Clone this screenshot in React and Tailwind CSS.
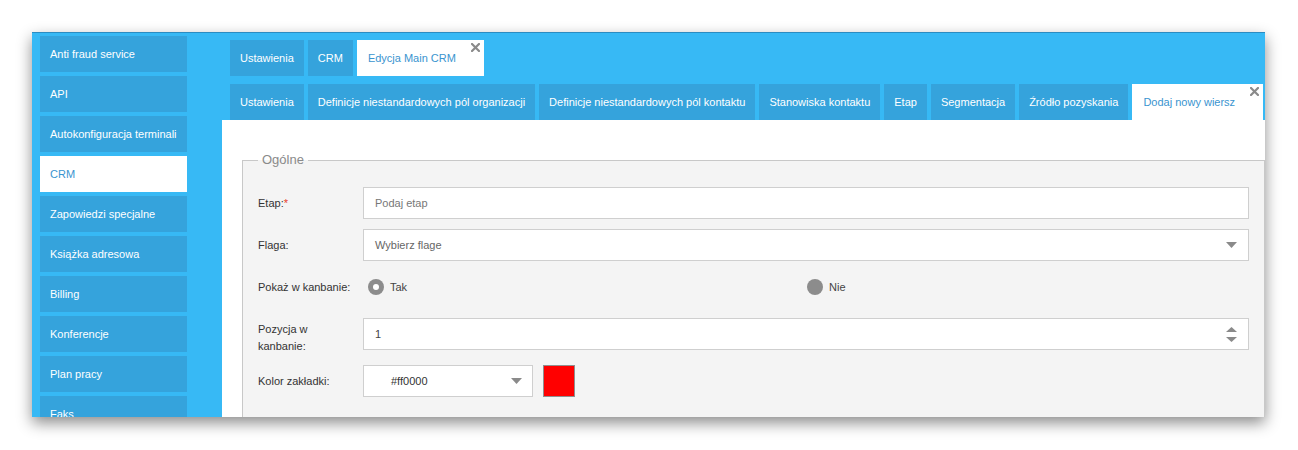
import React from 'react';

const sideItems = [
  'Anti fraud service',
  'API',
  'Autokonfiguracja terminali',
  'CRM',
  'Zapowiedzi specjalne',
  'Książka adresowa',
  'Billing',
  'Konferencje',
  'Plan pracy',
  'Faks',
];

const topTabs = [
  { label: 'Ustawienia' },
  { label: 'CRM' },
  { label: 'Edycja Main CRM', active: true },
];

const subTabs = [
  { label: 'Ustawienia' },
  { label: 'Definicje niestandardowych pól organizacji' },
  { label: 'Definicje niestandardowych pól kontaktu' },
  { label: 'Stanowiska kontaktu' },
  { label: 'Etap' },
  { label: 'Segmentacja' },
  { label: 'Źródło pozyskania' },
  { label: 'Dodaj nowy wiersz', active: true },
];

function CloseX() {
  return (
    <svg width="9" height="9" viewBox="0 0 9 9" className="absolute top-[3px] right-[4px]">
      <path d="M1 1 L8 8 M8 1 L1 8" stroke="#8a8a8a" strokeWidth="2.2" strokeLinecap="square" />
    </svg>
  );
}

function Tab({ label, active }) {
  if (active) {
    return (
      <div className="relative h-[36px] shrink-0 flex items-center bg-white pl-[11px] pr-[28px] text-[11px] text-[#3a94cf]">
        {label}
        <CloseX />
      </div>
    );
  }
  return (
    <div className="h-[36px] shrink-0 flex items-center bg-[#35a3dc] px-[10px] text-[11px] text-white">
      {label}
    </div>
  );
}

function DownArrow() {
  return (
    <svg width="11" height="6" viewBox="0 0 11 6">
      <path d="M0 0 L11 0 L5.5 6 Z" fill="#8a8a8a" />
    </svg>
  );
}

function Radio({ checked }) {
  return (
    <span className="w-[16px] h-[16px] rounded-full bg-[#8c8c8c] flex items-center justify-center">
      {checked && <span className="w-[6px] h-[6px] rounded-full bg-white" />}
    </span>
  );
}

export default function App() {
  return (
    <div className="w-[1298px] h-[450px] bg-white pt-[32px] pl-[32px] font-['Liberation_Sans',Arial,sans-serif]">
      <div className="w-[1233px] h-[385px] flex overflow-hidden bg-[#37b9f5] border-t border-[#2b8cc2] shadow-[0_6px_14px_rgba(0,0,0,0.45)]">
        {/* sidebar */}
        <aside className="w-[190px] shrink-0 pl-[8px] pt-[3px] flex flex-col gap-[4px]">
          {sideItems.map(item => (
            <div
              key={item}
              className={
                item === 'CRM'
                  ? 'w-[147px] h-[36px] shrink-0 flex items-center px-[10px] bg-white text-[11px] text-[#3a94cf]'
                  : 'w-[147px] h-[36px] shrink-0 flex items-center px-[10px] bg-[#35a3dc] text-[11px] text-white'
              }
            >
              {item}
            </div>
          ))}
        </aside>

        {/* main */}
        <div className="flex-1 flex flex-col min-w-0">
          <div className="pl-[8px] pt-[7px]">
            <div className="flex gap-[4px]">
              {topTabs.map(t => <Tab key={t.label} {...t} />)}
            </div>
            <div className="flex gap-[4px] mt-[8px]">
              {subTabs.map(t => <Tab key={t.label} {...t} />)}
            </div>
          </div>

          <div className="flex-1 bg-white pl-[20px] pt-[32px]">
            <fieldset className="border border-[#c8c8c8] bg-[#f4f4f4] px-[15px] pb-[20px]">
              <legend className="px-[4px] text-[13px] leading-[16px] text-[#8a8a8a]">Ogólne</legend>

              <div className="flex items-center h-[32px] mt-[19px]">
                <label className="w-[105px] shrink-0 text-[11px] text-[#333]">
                  Etap:<span className="text-[#e8402a]">*</span>
                </label>
                <div className="flex-1 h-[32px] flex items-center border border-[#cfcfcf] bg-white px-[11px] text-[11px] text-[#777]">
                  Podaj etap
                </div>
              </div>

              <div className="flex items-center h-[32px] mt-[10px]">
                <label className="w-[105px] shrink-0 text-[11px] text-[#333]">Flaga:</label>
                <div className="flex-1 h-[32px] flex items-center justify-between border border-[#cfcfcf] bg-white pl-[11px] pr-[11px] text-[11px] text-[#666]">
                  Wybierz flage
                  <DownArrow />
                </div>
              </div>

              <div className="flex items-center h-[32px] mt-[10px]">
                <label className="w-[105px] shrink-0 text-[11px] text-[#333]">Pokaż w kanbanie:</label>
                <div className="flex-1 grid grid-cols-2">
                  <div className="flex items-center gap-[6px] pl-[5px] text-[11px] text-[#444]">
                    <Radio checked />
                    Tak
                  </div>
                  <div className="flex items-center gap-[6px] pl-[1px] text-[11px] text-[#444]">
                    <Radio />
                    Nie
                  </div>
                </div>
              </div>

              <div className="flex items-start mt-[15px]">
                <label className="w-[105px] shrink-0 pt-[3px] text-[11px] leading-[17px] text-[#333]">
                  Pozycja w<br />kanbanie:
                </label>
                <div className="flex-1 h-[32px] flex items-center justify-between border border-[#cfcfcf] bg-white pl-[11px] pr-[11px] text-[11px] text-[#444]">
                  1
                  <div className="flex flex-col gap-[5px]">
                    <svg width="11" height="5" viewBox="0 0 11 5">
                      <path d="M0 5 L11 5 L5.5 0 Z" fill="#8a8a8a" />
                    </svg>
                    <svg width="11" height="5" viewBox="0 0 11 5">
                      <path d="M0 0 L11 0 L5.5 5 Z" fill="#8a8a8a" />
                    </svg>
                  </div>
                </div>
              </div>

              <div className="flex items-center h-[32px] mt-[10px]">
                <label className="w-[105px] shrink-0 text-[11px] text-[#333]">Kolor zakładki:</label>
                <div className="w-[170px] h-[32px] flex items-center justify-between border border-[#cfcfcf] bg-white pl-[27px] pr-[10px] text-[11px] text-[#333]">
                  #ff0000
                  <DownArrow />
                </div>
                <div className="ml-[10px] w-[32px] h-[32px] bg-[#ff0000] border border-[#8f8f8f]" />
              </div>
            </fieldset>
          </div>
        </div>
      </div>
    </div>
  );
}
